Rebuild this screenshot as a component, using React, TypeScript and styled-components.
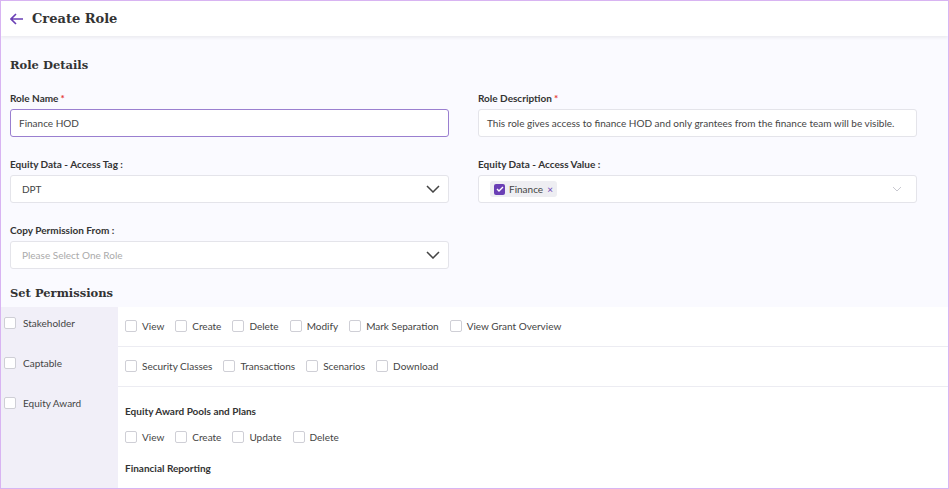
import styled, { createGlobalStyle } from "styled-components";

const Global = createGlobalStyle`
  html, body { margin: 0; padding: 0; }
  body { font-family: Lato, "Open Sans", sans-serif; color: #333; }
`;

const Page = styled.div`
  width: 949px;
  height: 489px;
  box-sizing: border-box;
  border: 1px solid #d8b4f2;
  background: #fafaff;
  overflow: hidden;
`;

const Header = styled.div`
  height: 35px;
  background: #fff;
  display: flex;
  align-items: center;
  gap: 8px;
  padding-left: 9px;
  box-shadow: 0 2px 3px rgba(0, 0, 0, 0.06);
`;

const Title = styled.div`
  font-family: "DejaVu Serif", "Liberation Serif", serif;
  font-weight: bold;
  font-size: 13px;
  color: #333;
`;

const Body = styled.div`
  padding: 22px 0 0 0;
`;

const SectionTitle = styled.div`
  font-family: "DejaVu Serif", "Liberation Serif", serif;
  font-weight: bold;
  font-size: 11.5px;
  color: #333;
  padding-left: 9px;
`;

const Grid = styled.div`
  display: grid;
  grid-template-columns: 439px 439px;
  column-gap: 29px;
  row-gap: 21px;
  padding: 20px 0 0 9px;
`;

const Field = styled.div`
  display: flex;
  flex-direction: column;
  gap: 5px;
`;

const Label = styled.div`
  font-size: 10px;
  font-weight: bold;
  color: #333;
  height: 12px;
`;

const Star = styled.span`
  color: #e53935;
  margin-left: 2px;
`;

const Box = styled.div<{ $active?: boolean; $placeholder?: boolean }>`
  height: 28px;
  box-sizing: border-box;
  border: 1px solid ${(p) => (p.$active ? "#9a7fd0" : "#e4e4ea")};
  border-radius: 3px;
  background: #fff;
  display: flex;
  align-items: center;
  padding: 0 8px 0 ${(p) => (p.$active ? "8px" : "11px")};
  font-size: 10px;
  color: ${(p) => (p.$placeholder ? "#aaa" : "#444")};
  justify-content: space-between;
`;

const Chip = styled.div`
  display: flex;
  align-items: center;
  gap: 4px;
  background: #eeeef2;
  border-radius: 3px;
  padding: 2px 4px;
  font-size: 10px;
  color: #444;
  margin-left: 2px;
`;

const ChipCheck = styled.div`
  width: 11px;
  height: 11px;
  border-radius: 2px;
  background: #6a3fb5;
  display: flex;
  align-items: center;
  justify-content: center;
`;

const PermTitle = styled(SectionTitle)`
  padding-top: 17px;
  padding-bottom: 7px;
`;

const Table = styled.div`
  display: grid;
  grid-template-columns: 117px 1fr;
`;

const RowLabel = styled.div`
  background: #f1eff8;
  display: flex;
  align-items: flex-start;
  gap: 7px;
  padding: 10px 0 0 3px;
  font-size: 10px;
  color: #444;
`;

const RowBody = styled.div<{ $last?: boolean }>`
  background: #fff;
  border-bottom: ${(p) => (p.$last ? "none" : "1px solid #ececf2")};
  padding: 13px 0 14px 7px;
  display: flex;
  flex-direction: column;
  gap: 14px;
`;

const Options = styled.div`
  display: flex;
  gap: 11px;
  font-size: 10px;
  color: #444;
`;

const Opt = styled.label`
  display: flex;
  align-items: center;
  gap: 5px;
`;

const Check = styled.span`
  width: 10px;
  height: 10px;
  border: 1px solid #cfcfd6;
  border-radius: 2px;
  background: #fff;
  display: inline-block;
`;

const SubTitle = styled.div`
  font-size: 10px;
  font-weight: bold;
  color: #333;
  margin-top: 5px;
`;

const Chevron = () => (
  <svg width="14" height="8" viewBox="0 0 14 8">
    <path d="M1 1l6 6 6-6" fill="none" stroke="#444" strokeWidth="1.5" />
  </svg>
);

const OptionRow = ({ items }: { items: string[] }) => (
  <Options>
    {items.map((i) => (
      <Opt key={i}>
        <Check />
        {i}
      </Opt>
    ))}
  </Options>
);

export default function App() {
  return (
    <Page>
      <Global />
      <Header>
        <svg width="14" height="12" viewBox="0 0 14 12">
          <path d="M13 6H2M6 1L1 6l5 5" fill="none" stroke="#6a3fb5" strokeWidth="1.6" />
        </svg>
        <Title>Create Role</Title>
      </Header>
      <Body>
        <SectionTitle>Role Details</SectionTitle>
        <Grid>
          <Field>
            <Label>Role Name<Star>*</Star></Label>
            <Box $active>Finance HOD</Box>
          </Field>
          <Field>
            <Label>Role Description<Star>*</Star></Label>
            <Box style={{ paddingLeft: 8 }}>
              This role gives access to finance HOD and only grantees from the finance team will be visible.
            </Box>
          </Field>
          <Field>
            <Label>Equity Data - Access Tag :</Label>
            <Box>DPT<Chevron /></Box>
          </Field>
          <Field>
            <Label>Equity Data - Access Value :</Label>
            <Box style={{ paddingLeft: 9, paddingRight: 14 }}>
              <Chip>
                <ChipCheck>
                  <svg width="8" height="6" viewBox="0 0 8 6">
                    <path d="M1 3l2 2 4-4" fill="none" stroke="#fff" strokeWidth="1.4" />
                  </svg>
                </ChipCheck>
                Finance <span style={{ color: "#6a3fb5" }}>×</span>
              </Chip>
              <svg width="10" height="6" viewBox="0 0 10 6">
                <path d="M1 1l4 4 4-4" fill="none" stroke="#c8c8d0" strokeWidth="1" />
              </svg>
            </Box>
          </Field>
          <Field>
            <Label>Copy Permission From :</Label>
            <Box $placeholder>Please Select One Role<Chevron /></Box>
          </Field>
        </Grid>
        <PermTitle>Set Permissions</PermTitle>
        <Table>
          <RowLabel><Check />Stakeholder</RowLabel>
          <RowBody>
            <OptionRow items={["View", "Create", "Delete", "Modify", "Mark Separation", "View Grant Overview"]} />
          </RowBody>
          <RowLabel><Check />Captable</RowLabel>
          <RowBody>
            <OptionRow items={["Security Classes", "Transactions", "Scenarios", "Download"]} />
          </RowBody>
          <RowLabel><Check />Equity Award</RowLabel>
          <RowBody $last>
            <SubTitle>Equity Award Pools and Plans</SubTitle>
            <OptionRow items={["View", "Create", "Update", "Delete"]} />
            <SubTitle>Financial Reporting</SubTitle>
            <OptionRow items={["Reports", "Historical Cost", "Fair Value", "Compensation Cost Settings", "Download"]} />
          </RowBody>
        </Table>
      </Body>
    </Page>
  );
}
